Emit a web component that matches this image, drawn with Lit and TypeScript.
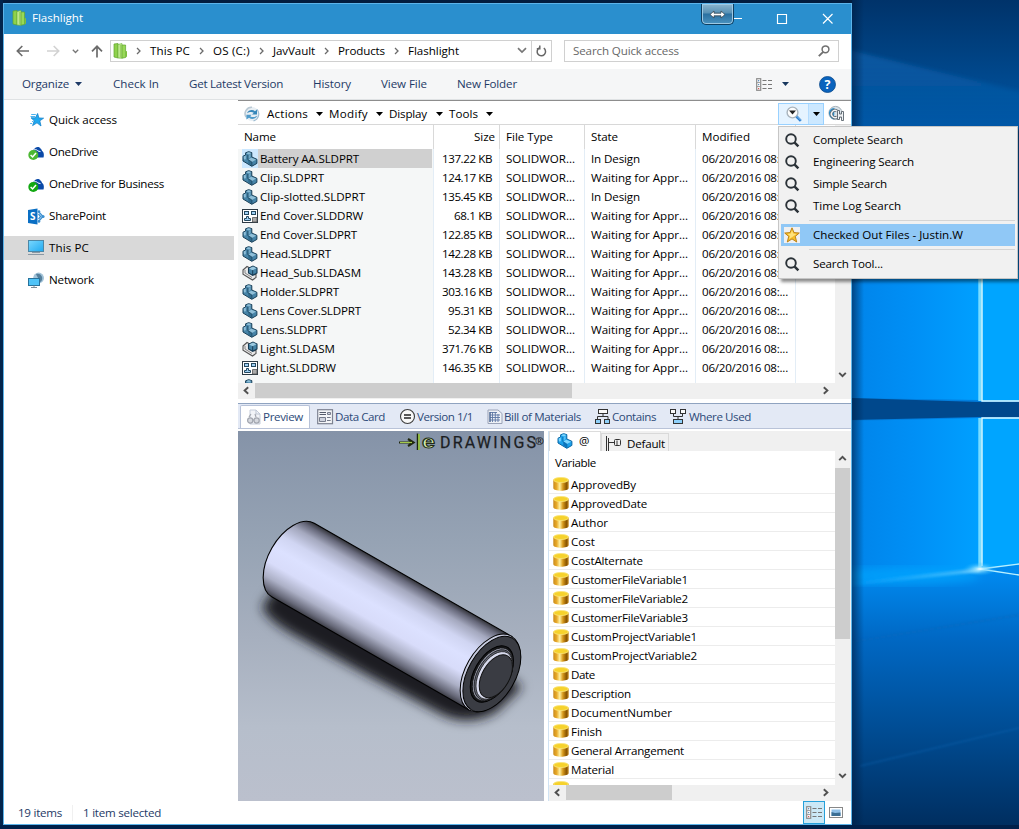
import { LitElement, html, css, svg } from "lit";
import { customElement, property } from "lit/decorators.js";

/** Single-line label whose tracking is adjusted so that it fills the given width. */
@customElement("ui-label")
class UiLabel extends LitElement {
  @property() text = "";
  @property({ type: Number }) w = 0;
  static styles = css`
    :host { display: inline-block; white-space: pre; flex: none; }
    span { display: inline-block; }
  `;
  updated() {
    const s = this.renderRoot.querySelector("span") as HTMLElement;
    if (!this.w) return;
    s.style.letterSpacing = "0px";
    const natural = s.getBoundingClientRect().width;
    s.style.letterSpacing = `${(this.w - natural) / this.text.length}px`;
    this.style.width = `${this.w}px`;
  }
  render() {
    return html`<span>${this.text}</span>`;
  }
}

const t = (text: string, w: number) => html`<ui-label .text=${text} .w=${w}></ui-label>`;
const icon = (w: number, h: number, body: unknown) =>
  html`<svg class="ic" width=${w} height=${h} viewBox="0 0 ${w} ${h}">${body}</svg>`;

const binder = icon(15, 16, svg`
  <path d="M1 1L5 .5V15L1 14Z" fill="#8fd14c" stroke="#5fa32c" stroke-width=".7"/>
  <path d="M5 1.500L9 .6V15.200L5 15Z" fill="#c9ef9a" stroke="#6db13a" stroke-width=".7"/>
  <path d="M9 2H12.600V14.500L9 15.200Z" fill="#98d957" stroke="#5fa32c" stroke-width=".7"/>
  <path d="M12.600 8.500L14 8V13.500L12.600 14.500Z" fill="#7cc13c"/><path d="M7.300 2V14.500" stroke="#8fce55"/>`);
const arrow = icon(7, 4, svg`<path d="M0 0H7L3.500 4Z" fill="currentColor"/>`);
const chev = icon(5, 8, svg`<path d="M1 1L4 4L1 7" fill="none" stroke="#6a6a6a" stroke-width="1.300"/>`);
const chevDown = icon(10, 7, svg`<path d="M1 1.200L5 5L9 1.200" fill="none" stroke="#777" stroke-width="1.700"/>`);

const sbPaths: Record<string, string> = {
  left: "M6.2 1.2L2.6 4.5L6.2 7.8", right: "M2.8 1.2L6.4 4.5L2.8 7.8",
  up: "M1.2 6.2L4.5 2.8L7.8 6.2", down: "M1.2 2.8L4.5 6.2L7.8 2.8",
};
const sb = (d: string) => html`<span class="sbb">${icon(9, 9, svg`<path d=${sbPaths[d]} fill="none" stroke="#505050" stroke-width="1.900"/>`)}</span>`;

const part = (a: string, b: string, c: string, o: string) => svg`
  <path d="M1 5.200L3.600 4V1.800Q6.500 -.3 9.800 1.600V6L14.900 8.300V12.400L9.800 15.300L1 10Z" fill=${b} stroke=${o} stroke-width="1"/>
  <path d="M4.200 2.200Q6.500 .6 9.200 1.900L7.200 3.500Q5.600 3 4.200 2.200Z" fill=${a}/><path d="M6.400 8.200L9.400 6.700L14.200 8.700L9.800 10.900Z" fill=${a}/>
  <path d="M1.600 5.600L3.800 4.600V8.200L2 8.600Z" fill=${a}/><path d="M6.600 4.500L8.600 3V6.200L6.600 7.400Z" fill=${a} opacity=".6"/>
  <path d="M9.800 11.200V14.700L6.300 12.600V9Z" fill=${c}/><path d="M5.800 4V8.600L9.900 11V15" fill="none" stroke=${o} stroke-width=".7"/>`;
const prt = icon(16, 16, part("#8fbfd8", "#4684a8", "#2f6a8c", "#1a4058"));
const prtBright = icon(16, 16, part("#7ed6ff", "#1ba0ea", "#0d74bd", "#0a66a5"));
const asm = icon(16, 16, svg`
  <path d="M1 5L5 1.500L8 3V8L12 10L14 9V12.500L10.500 15L1 9.200Z" fill="#e9e9e9" stroke="#555" stroke-width="1.100"/>
  <path d="M3 5V8L10 12.500" fill="none" stroke="#888"/>
  <path d="M6.500 3.200L11 1L15 3V8L10.600 10.300L6.500 8Z" fill="#4583a6" stroke="#173c55" stroke-width="1.100"/>
  <path d="M7 3.400L11 1.600L14.500 3.200L10.600 5.200Z" fill="#9bc9e0"/><path d="M10.700 5.200V10" stroke="#173c55"/>`);
const drw = icon(16, 14, svg`
  <rect x=".5" y=".5" width="15" height="13" fill="#fff" stroke="#2d3a44"/>
  <rect x="2.500" y="2.500" width="4" height="3" fill="#9fd0f5" stroke="#23485f"/><rect x="9.500" y="2.500" width="4" height="3" fill="#9fd0f5" stroke="#23485f"/>
  <path d="M2.500 11.500V9.500H4.500V7.500H6.500V9.500H8.500V11.500Z" fill="#9fd0f5" stroke="#23485f"/><path d="M10.500 8.500H15V13H10.500Z" fill="#aaa" stroke="#555" stroke-width=".8"/>`);
const cyl = icon(16, 14, svg`
  <defs><linearGradient id="g"><stop offset="0" stop-color="#c98a1a"/><stop offset=".22" stop-color="#e9ab2a"/><stop offset=".42" stop-color="#fff0a0"/><stop offset=".62" stop-color="#d89a1c"/><stop offset=".85" stop-color="#8a5500"/><stop offset="1" stop-color="#c48920"/></linearGradient></defs>
  <path d="M.3 2.800V11C.3 14.600 15.700 14.600 15.700 11V2.800Z" fill="url(#g)"/><ellipse cx="8" cy="3" rx="7.700" ry="2.800" fill="#f6d22c"/><ellipse cx="8" cy="3" rx="7.400" ry="2.500" fill="none" stroke="#fae88a" stroke-width=".7"/>`);
const mag = icon(15, 15, svg`<circle cx="6" cy="6" r="4.800" fill="none" stroke="#2b3238" stroke-width="1.900"/><path d="M9.600 9.600L13.400 13.400" stroke="#2b3238" stroke-width="2.500"/>`);
const star = icon(16, 16, svg`<rect width="16" height="16" fill="#f0f0f0"/><path d="M8 .8L10 5.600L15.300 6L11.300 9.400L12.700 15L8 11.900L3.300 15L4.700 9.400L.7 6L6 5.600Z" fill="#f5bd28" stroke="#b57a10" stroke-width=".9"/><path d="M8 3L9.200 6.400L12.500 7L9.600 9L8 10.300L5 12L6 9L3.500 7L6.800 6.500Z" fill="#ffe27c"/>`);
const swirl = icon(16, 16, svg`
  <circle cx="8" cy="8" r="7" fill="#e8eff4"/><path d="M2 11A6.500 6.500 0 0 1 8 1.200" fill="none" stroke="#b9c9d4" stroke-width="1.600"/>
  <path d="M3 7.200C4.400 3.800 8.600 3 11 5.200L13 3.400V8.600H8L9.800 6.800C8 5.400 5 6 3 7.200Z" fill="#3687ba"/>
  <path d="M13.400 9.600C12 13 8 14 5 11.800L2.400 13.400V8.800H7.600L6.200 10.200C8.400 11.600 11 11.200 13.400 9.600Z" fill="#4f9bca"/>
  <path d="M13 3.400A7 7 0 0 1 9.500 14.800" fill="none" stroke="#9fbdd2" stroke-width="1.200"/>`);
const searchFav = icon(18, 16, svg`<circle cx="7.500" cy="6.500" r="5.400" fill="#fdfdfd" stroke="#a9b4bd" stroke-width="1.400"/><path d="M4 4.600H11L7.500 8.400Z" fill="#222"/><path d="M11.500 10.500L15.800 14.800" stroke="#2d7fd0" stroke-width="2.600"/><path d="M11.800 10.200L16 14.400" stroke="#9ccdf5" stroke-width=".8"/>`);
const globeH = icon(17, 17, svg`<circle cx="7.500" cy="8" r="6.600" fill="#dbe4ea" stroke="#a4b0b8"/><path d="M1 7A6.600 6.600 0 0 0 6 14.400L6.500 3A6 6 0 0 0 1 7Z" fill="#2e8fcb"/><path d="M9 6A3.600 3.600 0 1 0 9 12" fill="none" stroke="#5c676f" stroke-width="3"/><path d="M9 6A3.600 3.600 0 1 0 9 12" fill="none" stroke="#f2f5f7" stroke-width="1.500"/><path d="M9.500 5.500H11.500V9H13.500V6.500H15.500V15.500H13.500V12H11.500V14.500H9.500Z" fill="#eef1f4" stroke="#59636c" stroke-width=".9"/>`);
const viewIc = icon(17, 13, svg`<rect x=".7" y=".7" width="4" height="11.600" fill="#fff" stroke="#8b8b8b" stroke-width="1.200"/><path d="M.7 4.600H4.700M.7 8.600H4.700" stroke="#9a9a9a"/><path d="M6.500 2.500H10.500M12 2.500H16M6.500 6.500H10.500M12 6.500H16M6.500 10.500H10.500M12 10.500H16" stroke="#777"/><path d="M2.700 2V3.400M2.700 6V7.200" stroke="#3b78b5"/><path d="M2.700 10V11.200" stroke="#c33"/>`);

const od = (g: string) => icon(17, 17, svg`<path d="M4 10C4 6 5.500 5.600 6 5.600C7 2.600 11.500 2 12.800 5C14 5.400 14 7 14 7C16.400 8 16 12.500 15.500 13.500H6Z" fill="#0b4aa8"/><path d="M4.500 7.500C6 4.800 9 5.400 10 7L12.500 7.600" fill="none" stroke="#fff" stroke-width="1"/><circle cx="5.300" cy="11" r="5" fill=${g}/><path d="M2.600 11L4.600 13L8 9" fill="none" stroke="#fff" stroke-width="1.500"/>`);
const pin = icon(17, 16, svg`<path d="M9.600 1.500L10.900 6L15.600 6.200L11.800 8.800L13 14L9 10.800L4.600 13.600L6.200 8.800L3 5.800H7.400Z" fill="#1fa8ef" stroke="#1583cb" stroke-width=".8"/><path d="M3.200 2.500H7.800M2.500 4.500H7M4 9.500H5M2.200 11.500H4" stroke="#4db4ef" stroke-width="1"/>`);
const sp = icon(17, 17, svg`<path d="M0 2L9.500 .5V16.500L0 15Z" fill="#0a6fc4"/><text x="2" y="12.200" font-family="Open Sans" font-weight="700" font-size="10" fill="#fff">S</text><path d="M10.500 3.500L15 8.500L10.500 13.500M10.500 6L12.600 8.500L10.500 11" fill="none" stroke="#3b8fd0" stroke-width="1.200"/><circle cx="15" cy="8.500" r="1.600" fill="#3b8fd0"/><circle cx="11" cy="3.600" r="1.300" fill="#3b8fd0"/><circle cx="11" cy="13.400" r="1.300" fill="#3b8fd0"/>`);
const pc = icon(17, 16, svg`<defs><linearGradient id="p" x2="1" y2="1"><stop stop-color="#7ad8ff"/><stop offset="1" stop-color="#1fa9f0"/></linearGradient></defs><rect x=".5" y=".5" width="15" height="11" fill="url(#p)" stroke="#4c87a6"/><path d="M4 12.500H12M0 14.500H16" stroke="#8a98a4" stroke-width="1"/>`);
const net = icon(17, 17, svg`<circle cx="10.600" cy="6" r="5.400" fill="#a3c3d8"/><path d="M8 2.200C10 1.200 12.500 2 13.500 4C15 6 14 9.500 12 10L9.800 5.600Z" fill="#557f9c"/><rect x=".5" y="6.500" width="11" height="7" fill="#4fc3f7" stroke="#28729b"/><path d="M3 15.500H9M6 13.600V16" stroke="#7e8d98"/>`);

const help = html`<svg class="ic" width="17" height="17" viewBox="0 0 17 17"><circle cx="8.500" cy="8.500" r="8" fill="#0a63bd" stroke="#0b4a8c" stroke-width=".8"/><text x="8.500" y="13" text-anchor="middle" font-family="Open Sans" font-weight="700" font-size="12.500" fill="#fff">?</text></svg>`;

const tabIcons = [
  icon(16, 18, svg`<path d="M4 2H10L14 6V16H4Z" fill="#f2f4f8" stroke="#c6cddb"/><path d="M10 2V6H14" fill="none" stroke="#bcc4d2"/><circle cx="4.200" cy="12.500" r="2.600" fill="#d6d9df" stroke="#a2a6af" stroke-width="1.200"/><circle cx="10.600" cy="12.500" r="2.600" fill="#d6d9df" stroke="#a2a6af" stroke-width="1.200"/><path d="M3 9L5 6M10 9L9 6M7 12H8.200" stroke="#a2a6af" stroke-width="1.200"/>`),
  icon(17, 16, svg`<rect x=".7" y=".7" width="14.800" height="14" fill="#f4f5f8" stroke="#7d8291" stroke-width="1.200"/><path d="M2.500 3.500H9M2.500 5.500H9" stroke="#555b6b"/><path d="M10.500 3.500H13.500V5.500H10.500Z" fill="#d0d4df" stroke="#767c8c"/><path d="M2.500 8.500H8.500V12.500H2.500ZM10 8.500H13.700M10 11.500H13.700" fill="#d0d4df" stroke="#767c8c"/>`),
  icon(17, 17, svg`<circle cx="8.500" cy="8.500" r="7" fill="#f8f8f8" stroke="#3c3c3c" stroke-width="1.100"/><path d="M5 7H12M5 10H12" stroke="#222" stroke-width="1.600"/>`),
  icon(16, 16, svg`<path d="M1 1H11L15 4.500V14.500H1Z" fill="#eef1f6" stroke="#9aa3b8"/><path d="M3 3.500H10M3 6H13M3 8.500H13M3 11H13M5.500 3V13M8.300 3V13M11 5V13" stroke="#5c77a4" stroke-width=".9"/><path d="M3 3V13" stroke="#4e6894" stroke-width="1.500"/>`),
  icon(16, 17, svg`<path d="M8 6V9M2.500 12V8.500H13V12" fill="none" stroke="#333"/><rect x="3.500" y="1.500" width="9" height="4" fill="#fafafa" stroke="#333"/><rect x=".5" y="11.500" width="5" height="4" fill="#8ed0fa" stroke="#333"/><rect x="9.500" y="11.500" width="5" height="4" fill="#8ed0fa" stroke="#333"/>`),
  icon(17, 17, svg`<path d="M3.500 5V8.500H12.500V5M8 8.500V11.500" fill="none" stroke="#333"/><rect x=".5" y="1.500" width="5" height="4" fill="#fafafa" stroke="#333"/><rect x="10.500" y="1.500" width="5" height="4" fill="#fafafa" stroke="#333"/><rect x="3.500" y="11.500" width="9" height="4" fill="#8ed0fa" stroke="#333"/>`),
];

const nav: [unknown, string, number][] = [
  [pin, "Quick access", 68], [od("#4cb833"), "OneDrive", 49], [od("#12a812"), "OneDrive for Business", 115],
  [sp, "SharePoint", 57], [pc, "This PC", 40], [net, "Network", 45],
];
const D = "In Design", W = "Waiting for Appr...";
const files: [unknown, string, number, string, string][] = [
  [prt, "Battery AA.SLDPRT", 99, "137.22 KB", D], [prt, "Clip.SLDPRT", 64, "124.17 KB", W],
  [prt, "Clip-slotted.SLDPRT", 105, "135.45 KB", D], [drw, "End Cover.SLDDRW", 103, "68.1 KB", W],
  [prt, "End Cover.SLDPRT", 97, "122.85 KB", W], [prt, "Head.SLDPRT", 71, "142.28 KB", W],
  [asm, "Head_Sub.SLDASM", 101, "143.28 KB", W], [prt, "Holder.SLDPRT", 79, "303.16 KB", W],
  [prt, "Lens Cover.SLDPRT", 101, "95.31 KB", W], [prt, "Lens.SLDPRT", 67, "52.34 KB", W],
  [asm, "Light.SLDASM", 75, "371.76 KB", W], [drw, "Light.SLDDRW", 76, "146.35 KB", W],
];
const vars: [string, number][] = [
  ["ApprovedBy", 65], ["ApprovedDate", 76], ["Author", 37], ["Cost", 24], ["CostAlternate", 72],
  ["CustomerFileVariable1", 117], ["CustomerFileVariable2", 117], ["CustomerFileVariable3", 117],
  ["CustomProjectVariable1", 126], ["CustomProjectVariable2", 126], ["Date", 24], ["Description", 60],
  ["DocumentNumber", 101], ["Finish", 31], ["General Arrangement", 113], ["Material", 43],
];
const tabs: [string, number][] = [
  ["Preview", 40], ["Data Card", 50], ["Version 1/1", 56], ["Bill of Materials", 77], ["Contains", 44], ["Where Used", 62],
];
const tools: [string, number][] = [["Actions", 41], ["Modify", 39], ["Display", 38], ["Tools", 29]];
const searches: ([string, number] | null)[] = [
  ["Complete Search", 90], ["Engineering Search", 101], ["Simple Search", 74], ["Time Log Search", 88], null,
  ["Checked Out Files - Justin.W", 150], null, ["Search Tool...", 70],
];

const wallpaper = html`<svg class="wall" width="1019" height="829" viewBox="0 0 1019 829">
  <defs>
    <linearGradient id="w" x2="0" y2="1"><stop offset="0" stop-color="#00336a"/><stop offset=".07" stop-color="#004384"/><stop offset=".15" stop-color="#0055a4"/><stop offset=".34" stop-color="#0078d2"/><stop offset=".5" stop-color="#007fe0"/><stop offset=".69" stop-color="#008af0"/><stop offset=".77" stop-color="#0068c4"/><stop offset=".87" stop-color="#004f98"/><stop offset="1" stop-color="#002d5e"/></linearGradient>
    <linearGradient id="w2"><stop offset="0" stop-color="#0084ea"/><stop offset=".5" stop-color="#0090f6"/><stop offset="1" stop-color="#00a0ff"/></linearGradient>
    <linearGradient id="edge"><stop offset="0" stop-color="#001c40" stop-opacity=".6"/><stop offset="1" stop-color="#001c40" stop-opacity="0"/></linearGradient>
    <linearGradient id="ray"><stop offset="0" stop-color="#00a0ff" stop-opacity=".5"/><stop offset=".85" stop-color="#5ccaff"/><stop offset="1" stop-color="#eaffff"/></linearGradient>
    <linearGradient id="tp" x2="0" y2="1"><stop offset="0" stop-color="#1674c8" stop-opacity=".45"/><stop offset="1" stop-color="#1674c8" stop-opacity="0"/></linearGradient>
    <radialGradient id="glow"><stop offset="0" stop-color="#fff"/><stop offset=".25" stop-color="#9fe6ff" stop-opacity=".8"/><stop offset="1" stop-color="#1bb2ff" stop-opacity="0"/></radialGradient>
    <filter id="b"><feGaussianBlur stdDeviation="4"/></filter><filter id="b1"><feGaussianBlur stdDeviation="1.200"/></filter><filter id="b2"><feGaussianBlur stdDeviation="2.200"/></filter>
  </defs>
  <rect width="1019" height="829" fill="url(#w)"/>
  <path d="M845 49L1030 94V135H845Z" fill="url(#tp)" filter="url(#b2)"/>
  <path d="M852 270H980V400L852 398Z" fill="url(#w2)"/><path d="M852 421L980 418V568L852 583Z" fill="url(#w2)"/>
  <path d="M852 398L980 402H1019V417H980L852 420Z" fill="#00488c"/>
  <rect x="982" y="270" width="37" height="131" fill="#00a5ff"/><path d="M982 418H1019V565L982 569Z" fill="#00a5ff"/>
  <ellipse cx="900" cy="576" rx="80" ry="9" fill="#00a7ff" opacity=".65" filter="url(#b)"/>
  <path d="M852 582L980 568V572L852 586Z" fill="url(#ray)" opacity=".65" filter="url(#b1)"/>
  <path d="M980 270V401M980 418V570" stroke="#79dcff" stroke-width="3.400"/><path d="M982 270V401H1019M1019 418H982V566" fill="none" stroke="#dffcff" stroke-width="1.400"/>
  <path d="M980 569L1019 564M980 569L1019 575" stroke="#b9f0ff" stroke-width="1.400"/><ellipse cx="980" cy="569" rx="17" ry="7" fill="url(#glow)"/>
  <path d="M852 642L1019 615" stroke="#0a66b8" stroke-width="2" opacity=".4" filter="url(#b1)"/><path d="M860 766L1019 728" stroke="#0c66b4" stroke-width="2" opacity=".35" filter="url(#b1)"/>
  <rect x="852" width="12" height="829" fill="url(#edge)"/>
  <rect width="852" height="4" fill="#021d3f"/><rect width="3" height="829" fill="#02254d"/><rect y="825" width="1019" height="4" fill="#00204a"/>
</svg>`;

const model = html`<svg class="model" width="306" height="370" viewBox="0 0 306 370">
  <defs>
    <linearGradient id="bg" x2="0" y2="1"><stop offset="0" stop-color="#8593a8"/><stop offset=".3" stop-color="#96a3b4"/><stop offset=".55" stop-color="#a6afbe"/><stop offset=".8" stop-color="#b6becb"/><stop offset="1" stop-color="#bbc0cd"/></linearGradient>
    <linearGradient id="body" x2="0" y2="1"><stop offset="0" stop-color="#33343a"/><stop offset=".06" stop-color="#66687a"/><stop offset=".16" stop-color="#a4a8be"/><stop offset=".32" stop-color="#d0d5f2"/><stop offset=".48" stop-color="#dce1ff"/><stop offset=".66" stop-color="#d8dcfa"/><stop offset=".82" stop-color="#acb0c6"/><stop offset=".94" stop-color="#686a7a"/><stop offset="1" stop-color="#3c3d46"/></linearGradient>
    <filter id="s" x="-20%" y="-60%" width="140%" height="220%"><feGaussianBlur stdDeviation="6"/></filter>
  </defs>
  <rect width="306" height="370" fill="url(#bg)"/>
  <path d="M24 176Q30 190 60 206L133 246L205 284Q232 296 258 281L284 256L230 215L50 140Z" fill="#1c1d20" filter="url(#s)"/>
  <g transform="translate(253 242.500) rotate(29.800)">
    <path d="M0 -42.500H-228A24.500 42.500 0 0 0 -228 42.500H0Z" fill="url(#body)" stroke="#000" stroke-width="1.100"/>
    <ellipse cx="-1" rx="24.500" ry="42.500" fill="#c8cce0" stroke="#000"/><ellipse cx="1" rx="23.600" ry="41.300" fill="#3a3c43" stroke="#000"/>
    <ellipse cx="1" rx="17.500" ry="31" fill="#16171a" stroke="#000"/><ellipse cx="1.800" rx="16.500" ry="29" fill="#9699a8" stroke="#111" stroke-width=".8"/>
    <ellipse cx="2.800" rx="15.800" ry="27.500" fill="#666975" stroke="#17181b" stroke-width=".8"/><ellipse cx="3.800" rx="15" ry="26" fill="#d8dbee" stroke="#111" stroke-width=".7"/>
    <ellipse cx="5.600" rx="13.600" ry="23.500" fill="#3a3c43" stroke="#111"/>
  </g>
  <path d="M161 11.500H173M170 8L175.500 11.500L170 15" fill="none" stroke="#20280f" stroke-width="2.200"/><path d="M162 11.500H174" stroke="#a3c84a" stroke-width="1.200"/>
  <path d="M179.500 2.500V19" stroke="#1c2610" stroke-width="1.500"/><path d="M181 3V19" stroke="#96c531" stroke-width="1.600"/>
  <text x="184" y="17" font-family="Liberation Sans" font-size="17.500" font-weight="700" fill="#d4ecac" stroke="#222b16" stroke-width="1" textLength="13" lengthAdjust="spacingAndGlyphs">e</text>
  <text x="202" y="17" font-family="Roboto" font-size="16" fill="#1c1e22" stroke="#1c1e22" stroke-width=".25" textLength="96" lengthAdjust="spacing">DRAWINGS</text>
  <text x="297" y="14" font-family="Open Sans" font-size="11" font-weight="700" fill="#1c1e22" textLength="9" lengthAdjust="spacingAndGlyphs">®</text>
</svg>`;

@customElement("app-root")
class AppRoot extends LitElement {
  static styles = css`
    :host { display: block; position: relative; width: 1019px; height: 829px; overflow: hidden; font: 11.6px/16px "Open Sans", "Noto Sans", sans-serif; color: #000; background: #002b5c; }
    * { box-sizing: border-box; }
    .ic { display: block; flex: none; }
    .wall { position: absolute; inset: 0; }
    .win { position: absolute; left: 3px; top: 3px; width: 849px; height: 822px; border: 1px solid #5cb4ea; background: #fff; display: flex; flex-direction: column; }
    .title { height: 30px; background: #2a8fce; color: #fff; display: flex; align-items: center; padding: 0 18px 2px 8px; gap: 5px; flex: none; }
    .ctrls { margin-left: auto; display: flex; align-items: center; }
    .rdp { position: absolute; left: 697px; top: 0; width: 33px; height: 21px; border: 1.5px solid #0e3e60; border-top: 0; border-radius: 0 0 5px 5px; background: linear-gradient(#8cb5ce, #5791b5 45%, #2a70a0 50%, #4a93c0); box-shadow: inset 0 0 0 1px #9dc9e4; display: grid; place-items: center; }
    .addr { height: 35px; display: flex; align-items: center; flex: none; padding: 0 12px 2px 12px; }
    .nvb { display: flex; align-items: center; width: 94px; padding-top: 1px; }
    .nvb .fw { margin-left: 16px; } .nvb .dd { margin: 0 12px 0 12px; display: block; }
    .path { display: flex; align-items: center; width: 422px; height: 22px; border: 1px solid #d0d0d0; padding: 0 4px 0 2px; }
    .path ui-label { margin: 0 9px; }
    .path .ic:first-child { margin-right: 8px; }
    .path > .last { margin-left: auto; }
    .path > .last .ic { margin: 0; }
    .ref { width: 20px; height: 22px; border: 1px solid #d0d0d0; border-left: 0; display: grid; place-items: center; margin-right: 12px; }
    .search { flex: 1; height: 22px; border: 1px solid #d0d0d0; display: flex; align-items: center; justify-content: space-between; padding: 0 8px; color: #686868; }
    .cmd { height: 31px; background: #f5f6f7; border-bottom: 1px solid #dfe2e4; display: flex; align-items: center; gap: 30px; padding: 0 15px 0 18px; color: #1e3a66; flex: none; }
    .org { display: flex; align-items: center; gap: 6px; margin-right: 1px; }
    .right { margin-left: auto; display: flex; align-items: center; color: #17375e; }
    .right .ic:nth-child(2) { margin: 0 30px 0 9px; }
    .main { flex: 1; display: flex; min-height: 0; }
    .nav { width: 230px; padding-top: 8px; flex: none; }
    .ni { height: 24px; margin-bottom: 8px; display: flex; align-items: center; padding-left: 24px; gap: 4px; }
    .ni.on { background: #d9d9d9; }
    .content { margin-left: 4px; width: 613px; display: flex; flex-direction: column; }
    .tb { height: 25px; border-top: 1px solid #8d8d8d; border-bottom: 1px solid #d8d8d8; display: flex; align-items: center; padding: 2px 0 0 6px; flex: none; }
    .tb > .ic { margin-right: 7px; }
    .mi { display: flex; align-items: center; justify-content: space-between; margin-right: 6px; }
    .m0 { width: 56px; } .m1, .m2 { width: 54px; } .m3 { width: 44px; }
    .sbtn { margin-left: auto; display: flex; height: 22px; border: 1px solid #99d1ff; background: #e5f3ff; width: 46px; }
    .sbtn > * { display: grid; place-items: center; }
    .sbtn .a { width: 29px; } .sbtn .b { flex: 1; background: #cce8ff; border-left: 1px solid #b3dcff; }
    .tb .gh { margin: 0 6px 0 4px; }
    .list { height: 258px; display: flex; flex: none; overflow: hidden; }
    .cols { flex: 1; overflow: hidden; }
    .row { display: grid; grid-template-columns: 196px 66px 85px 111px 100px; height: 19px; }
    .row > div { border-right: 1px solid #e3edf6; display: flex; align-items: center; min-width: 0; white-space: nowrap; }
    .hd { height: 24px; }
    .hd > div { border-color: #d9d9d9; padding: 0 0 1px 6px; }
    .hd > .sz { padding-right: 4px; justify-content: flex-end; }
    .row .nm { padding-left: 4px; background: #f5f7f7; }
    .row .nm .in { display: flex; align-items: center; gap: 2px; height: 19px; width: 190px; }
    .on .in { background: linear-gradient(90deg, #cce8ff 16px, #d0d0d0 16px); }
    .hd .nm { background: #fff; padding-left: 6px; }
    .sz { justify-content: flex-end; padding-right: 7px; }
    .ft { padding-left: 6px; }
    .vs { width: 16px; background: #f0f0f0; display: flex; flex-direction: column; justify-content: space-between; }
    .vs i { display: block; background: #cdcdcd; width: 15px; }
    .vs1 i { height: 90px; margin: 42px 0 auto; }
    .sbb { width: 16px; height: 16px; display: grid; place-items: center; flex: none; }
    .vs .sbb { width: 15px; padding: 0 1px 1px 0; }
    .hs { height: 16px; background: #f0f0f0; display: flex; flex: none; padding-right: 18px; }
    .hs .sbb { height: 15px; }
    .hs i { background: #cdcdcd; display: block; height: 15px; }
    .h1 i { width: 317px; margin: 0 auto 0 1px; }
    .tabs { margin-top: 4px; height: 26px; border-top: 1px solid #8fa3c0; border-bottom: 1px solid #b9c3d8; background: #e3e9f5; display: flex; color: #2d4a78; flex: none; padding: 1px 0 0 2px; }
    .tab { display: flex; align-items: center; gap: 1px; height: 23px; padding-left: 5px; }
    .tab.on { background: #fff; width: 70px; border: 1px solid #b7c2d8; border-bottom: 0; border-radius: 2px 2px 0 0; margin-right: 2px; }
    .tab:not(.on) { padding-right: 9px; }
    .tab:last-child { gap: 2px; }
    .split { margin-top: 2px; height: 370px; display: flex; flex: none; }
    .model { display: block; flex: none; }
    .vars { margin-left: 4px; flex: 1; border-left: 1px solid #cfe2f3; display: flex; flex-direction: column; background: #f0f0f0; }
    .vt { height: 20px; display: flex; align-items: flex-end; flex: none; }
    .vt .a { width: 52px; height: 20px; background: #fff; border: 1px solid #dcdcdc; border-bottom: 0; display: flex; align-items: center; gap: 6px; padding: 0 0 1px 7px; }
    .vt .b { height: 18px; width: 68px; border: 1px solid #d9d9d9; border-bottom: 0; display: flex; align-items: center; gap: 5px; padding: 2px 0 0 3px; }
    .vb { height: 334px; display: flex; }
    .vl { flex: 1; background: #fff; overflow: hidden; }
    .vh { height: 24px; padding: 4px 0 0 6px; }
    .vr { height: 19px; display: flex; align-items: center; gap: 2px; padding: 0 0 0 4px; border-bottom: 1px solid #ececec; }
    .vr ui-label { margin-top: 1px; }
    .vs2 i { height: 171px; margin: 1px 0 auto; }
    .vs2 .sbb:last-child { margin-bottom: 1px; }
    .h2 i { width: 106px; margin: 0 auto 0 1px; }
    .stat { flex: 1; display: flex; align-items: center; color: #1e3a66; margin-left: -234px; padding-left: 14px; gap: 12px; min-height: 23px; }
    .stat .v { width: 1px; height: 16px; background: #f0f0f0; margin-left: -2px; margin-right: -2px; }
    .vw { margin-left: auto; width: 22px; height: 23px; border: 1px solid #26a0da; background: #cbe8f6; display: grid; place-items: center; }
    .stat > .ic { margin: 0 8px 0 -8px; }
    .menu { position: absolute; left: 778px; top: 126px; width: 240px; height: 153px; background: #f1f1f1; border: 1px solid #c6c6c6; box-shadow: 3px 3px 3px rgba(0,0,0,.45); padding: 2px; }
    .mn { height: 22px; display: flex; align-items: center; padding-left: 4px; gap: 13px; }
    .mn.on { background: #90c8f6; padding-left: 3px; }
    .hr { height: 7px; padding-top: 3px; margin-left: 28px; } .hr i { display: block; height: 1px; background: #d4d4d4; }
  `;

  render() {
    return html`${wallpaper}
      <div class="win">
        <div class="title">${binder}${t("Flashlight", 51)}
          <div class="ctrls"><svg class="ic" width="100" height="13" viewBox="0 0 100 13"><path d="M0 6.500H9M44.500 2.500H53.500V11.500H44.500ZM90 2L99.500 11.500M99.500 2L90 11.500" fill="none" stroke="#fff" stroke-width="1.150"/></svg></div>
        </div>
        <div class="rdp">${icon(17, 9, svg`<path d="M1 4.500L5 1V3.200H12V1L16 4.500L12 8V5.800H5V8Z" fill="#fff" stroke="#35454f" stroke-width=".8"/>`)}</div>
        <div class="addr">
          <span class="nvb">${icon(14, 12, svg`<path d="M13 6H1.500M6.300 1L1.300 6L6.300 11" fill="none" stroke="#6b6b6b" stroke-width="1.600"/>`)}
          <span class="fw">${icon(14, 12, svg`<path d="M1 6H12.500M7.700 1L12.700 6L7.700 11" fill="none" stroke="#d2d2d2" stroke-width="1.600"/>`)}</span>
          <span class="dd">${icon(7, 5, svg`<path d="M.8 .8L3.500 3.500L6.200 .8" fill="none" stroke="#777" stroke-width="1.300"/>`)}</span>
          ${icon(12, 13, svg`<path d="M6 12.500V1.500M1 6.300L6 1.300L11 6.300" fill="none" stroke="#6b6b6b" stroke-width="1.700"/>`)}</span>
          <div class="path">${binder}${chev}${t("This PC", 40)}${chev}${t("OS (C:)", 37)}${chev}${t("JavVault", 42)}${chev}${t("Products", 47)}${chev}${t("Flashlight", 51)}<span class="last">${chevDown}</span></div>
          <div class="ref">${icon(11, 12, svg`<path d="M3.200 3A4.200 4.200 0 1 0 7.800 3.200M3.800 .5V3.800H.8" fill="none" stroke="#666" stroke-width="1.500"/>`)}</div>
          <div class="search">${t("Search Quick access", 106)}${icon(12, 12, svg`<circle cx="7.500" cy="4.300" r="3.400" fill="none" stroke="#707070" stroke-width="1.500"/><path d="M5.200 6.800L.8 11.200" stroke="#707070" stroke-width="1.900"/>`)}</div>
        </div>
        <div class="cmd"><span class="org">${t("Organize", 47)}${arrow}</span>${t("Check In", 46)}${t("Get Latest Version", 94)}${t("History", 38)}${t("View File", 46)}${t("New Folder", 60)}
          <span class="right">${viewIc}${arrow}${help}</span></div>
        <div class="main">
          <div class="nav">${nav.map(([i, s, w], k) => html`<div class="ni ${k === 4 ? "on" : ""}">${i}${t(s, w)}</div>`)}</div>
          <div class="content">
            <div class="tb">${swirl}
              ${tools.map(([s, w], k) => html`<span class="mi m${k}">${t(s, w)}${arrow}</span>`)}
              <span class="sbtn"><span class="a">${searchFav}</span><span class="b">${arrow}</span></span><span class="gh">${globeH}</span>
            </div>
            <div class="list"><div class="cols">
              <div class="row hd"><div class="nm">${t("Name", 32)}</div><div class="sz">${t("Size", 21)}</div><div>${t("File Type", 47)}</div><div>${t("State", 27)}</div><div>${t("Modified", 48)}</div></div>
              ${files.map(([i, n, w, s, st], k) => html`<div class="row ${k ? "" : "on"}"><div class="nm"><span class="in">${i}${t(n, w)}</span></div><div class="sz">${t(s, s.length === 9 ? 50 : s.length === 8 ? 44 : 38)}</div><div class="ft">${t("SOLIDWOR...", 69)}</div><div class="ft">${t(st, st === D ? 49 : 97)}</div><div class="ft">${t("06/20/2016 08:...", 86)}</div></div>`)}
              <div class="row"><div class="nm"><span class="in">${prt}</span></div><div></div><div></div><div></div><div></div></div>
            </div><div class="vs vs1"><i></i>${sb("down")}</div></div>
            <div class="hs h1">${sb("left")}<i></i>${sb("right")}</div>
            <div class="tabs">${tabs.map(([s, w], k) => html`<span class="tab ${k ? "" : "on"}">${tabIcons[k]}${t(s, w)}</span>`)}</div>
            <div class="split">${model}
              <div class="vars">
                <div class="vt"><span class="a">${prtBright}${t("@", 11)}</span><span class="b">${icon(17, 16, svg`<path d="M1.500 0V16M3.500 2V16M3.500 6.500H9M12 4.500V10" fill="none" stroke="#333"/><rect x="9.500" y="3.500" width="6" height="6" rx="1" fill="none" stroke="#333"/>`)}${t("Default", 38)}</span></div>
                <div class="vb"><div class="vl"><div class="vh">${t("Variable", 41)}</div>${vars.map(([s, w]) => html`<div class="vr">${cyl}${t(s, w)}</div>`)}<div class="vr">${cyl}</div></div>
                  <div class="vs vs2">${sb("up")}<i></i>${sb("down")}</div></div>
                <div class="hs h2">${sb("left")}<i></i>${sb("right")}</div>
              </div>
            </div>
            <div class="stat">${t("19 items", 44)}<span class="v"></span>${t("1 item selected", 78)}<span class="vw">${viewIc}</span>
              ${icon(14, 12, svg`<rect x=".5" y=".5" width="13" height="10" fill="#fff" stroke="#888"/><path d="M2.500 2.500H11.500V9H2.500Z" fill="#8fc0e8"/><path d="M2.500 5L6 6L11.500 5.500V9H2.500Z" fill="#3c6f94"/>`)}</div>
          </div>
        </div>
      </div>
      <div class="menu">
        ${searches.map((m, k) =>
          m ? html`<div class="mn ${k === 5 ? "on" : ""}">${k === 5 ? star : mag}${t(m[0], m[1])}</div>` : html`<div class="hr"><i></i></div>`)}
      </div>`;
  }
}
